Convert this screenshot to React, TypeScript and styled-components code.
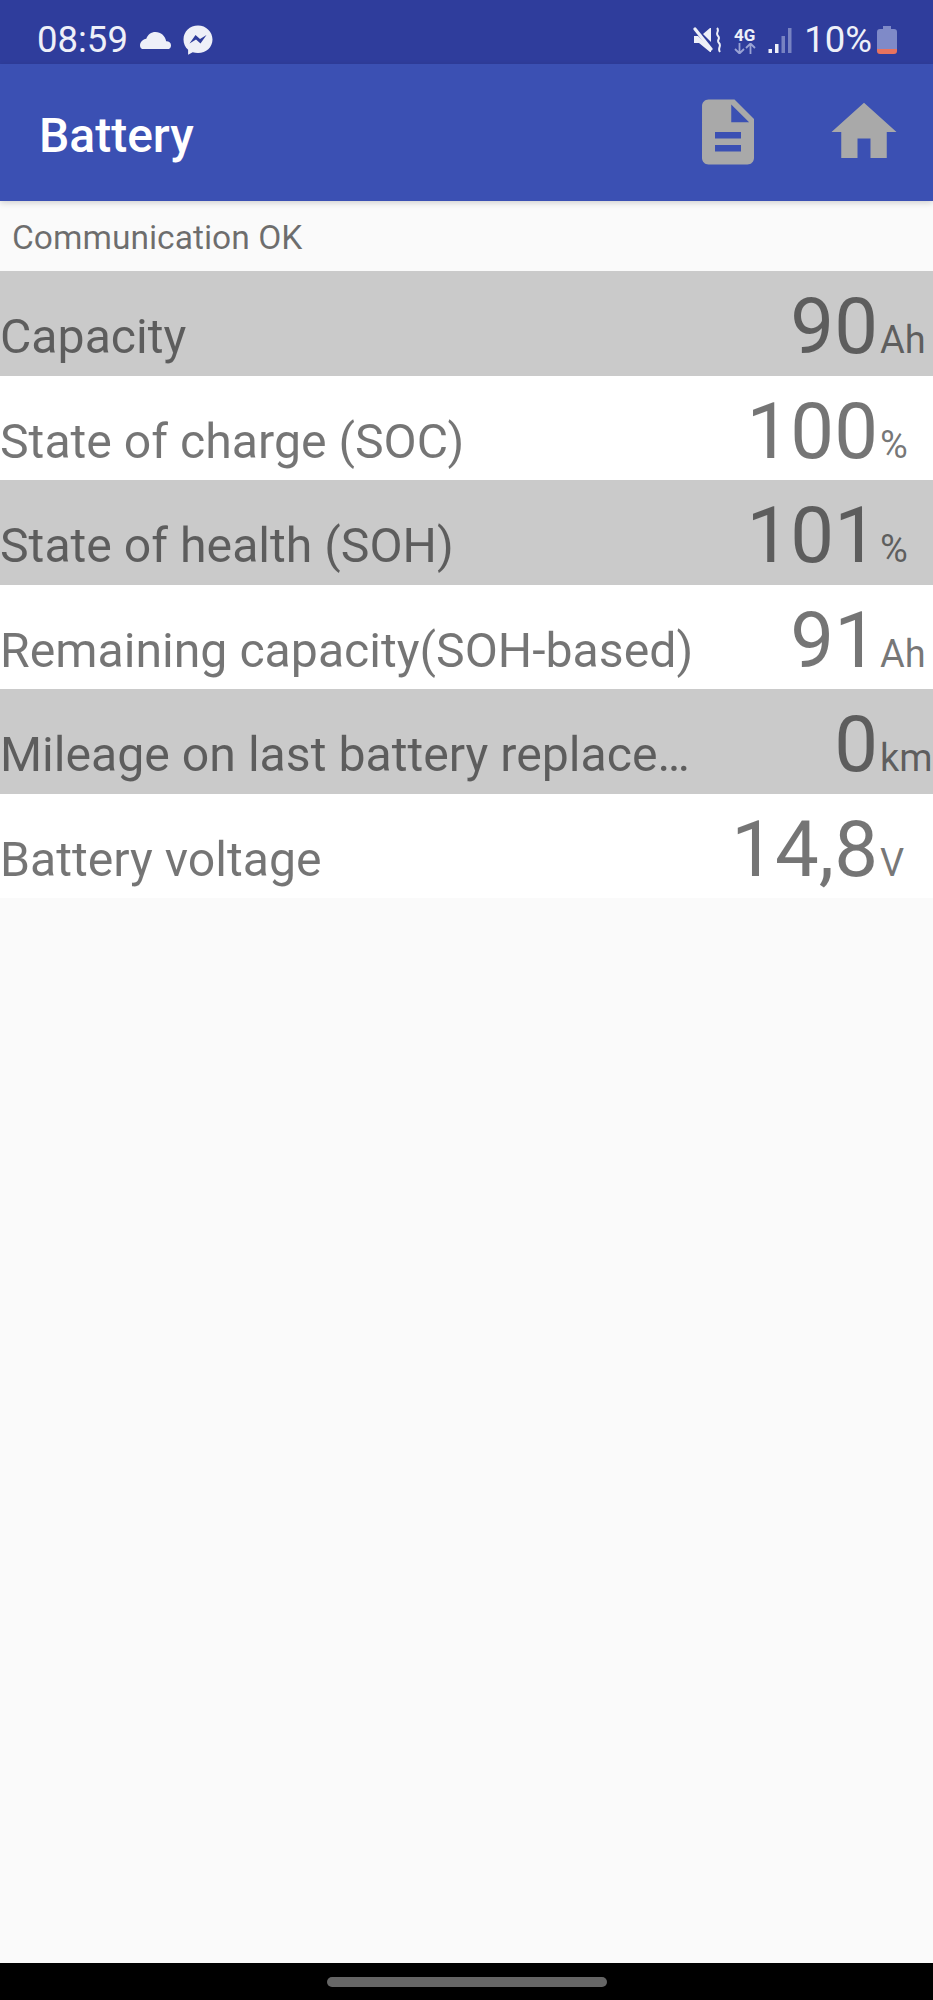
import React from "react";
import styled, { createGlobalStyle } from "styled-components";

const Global = createGlobalStyle`
  html, body { margin: 0; padding: 0; background: #fafafa; }
  * { box-sizing: border-box; }
`;

const Screen = styled.div`
  width: 933px;
  height: 2000px;
  display: flex;
  flex-direction: column;
  background: #fafafa;
  font-family: Roboto, "Liberation Sans", sans-serif;
  overflow: hidden;
`;

const StatusBar = styled.div`
  height: 64px;
  flex: none;
  background: #2f3d9c;
  color: #eef0f8;
  display: flex;
  align-items: center;
  padding: 16px 36px 0 37px;
  font-size: 36.5px;
`;

const StatusGroup = styled.div<{ $gap: number }>`
  display: flex;
  align-items: center;
  gap: ${(p) => p.$gap}px;
`;

const Spacer = styled.div`
  flex: 1;
`;

const StatusText = styled.span`
  line-height: 40px;
`;

const NetStack = styled.div`
  width: 23px;
  display: flex;
  flex-direction: column;
  align-items: center;
`;

const NetLabel = styled.span`
  font-size: 17px;
  line-height: 16px;
  font-weight: 700;
`;

const AppBar = styled.header`
  height: 137px;
  flex: none;
  background: #3b50b3;
  display: flex;
  align-items: center;
  padding: 0 30px 2px 39px;
  position: relative;
  z-index: 1;
  box-shadow: 0 2px 6px rgba(0, 0, 0, 0.16);
`;

const Title = styled.h1`
  margin: 0;
  padding-top: 7px;
  color: #fff;
  font-size: 48px;
  font-weight: 500;
  flex: 1;
`;

const ActionIcon = styled.svg`
  display: block;
  fill: #a9a9a9;
`;

const Actions = styled.div`
  display: flex;
  align-items: center;
  gap: 58px;
`;

const CommStatus = styled.div`
  height: 70px;
  flex: none;
  padding: 12px 0 0 12px;
  font-size: 33.6px;
  line-height: 50px;
  color: rgba(0, 0, 0, 0.56);
`;

const Row = styled.div<{ $shaded: boolean }>`
  height: 104.5px;
  flex: none;
  display: flex;
  align-items: baseline;
  padding-top: 16px;
  background: ${(p) => (p.$shaded ? "#cacaca" : "#ffffff")};
  color: rgba(0, 0, 0, 0.54);
`;

const Label = styled.div`
  flex: none;
  width: 692px;
  font-size: 48.2px;
  line-height: 80px;
  white-space: nowrap;
`;

const Value = styled.div`
  flex: 1;
  text-align: right;
  font-size: 78px;
  line-height: 80px;
  white-space: nowrap;
`;

const Unit = styled.div`
  flex: none;
  width: 53px;
  margin-left: 2px;
  font-size: 38px;
  white-space: nowrap;
`;

const NavBar = styled.div`
  margin-top: auto;
  height: 37px;
  flex: none;
  background: #000;
  display: flex;
  justify-content: center;
  padding-top: 14px;
`;

const HomeHandle = styled.div`
  width: 280px;
  height: 10px;
  border-radius: 5px;
  background: #666;
`;

const rows = [
  { label: "Capacity", value: "90", unit: "Ah" },
  { label: "State of charge (SOC)", value: "100", unit: "%" },
  { label: "State of health (SOH)", value: "101", unit: "%" },
  { label: "Remaining capacity(SOH-based)", value: "91", unit: "Ah" },
  { label: "Mileage on last battery replace…", value: "0", unit: "km" },
  { label: "Battery voltage", value: "14,8", unit: "V" },
];

const CloudIcon = () => (
  <svg width="31" height="18" viewBox="0 0 32 20" fill="#eef0f8" preserveAspectRatio="none">
    <path d="M4 20h24a4 4 0 0 0 4-4 4.500 4.500 0 0 0-5-4.500C26 5 21.500 1 16 1c-4.500 0-8 3-9.500 7.500C3 9 0 12 0 16a4 4 0 0 0 4 4z" />
  </svg>
);

const MessengerIcon = () => (
  <svg width="30" height="30" viewBox="0 0 30 30">
    <path fill="#eef0f8" d="M15 .5C6.800.5.500 6.500.5 14.500c0 4.200 1.700 7.800 4.600 10.300v5l4.600-2.500c1.600.5 3.400.8 5.300.8 8.200 0 14.500-6 14.500-13.600S23.200.5 15 .5z" />
    <path fill="#2f3d9c" d="M6.500 18.500l6-8.500 4.500 4 6.500-4-6 8.500-4.500-4z" />
  </svg>
);

const MuteIcon = () => (
  <svg width="28" height="28" viewBox="0 0 28 28" fill="none">
    <path fill="#eef0f8" d="M10 8l7-6h1v14zM1 10h4l13 12v4h-1L6 17H1z" />
    <path stroke="#eef0f8" strokeWidth="3.200" strokeLinecap="round" d="M2 3l16 20" />
    <path stroke="#eef0f8" strokeWidth="2" d="M24 2c3 3-2 5 1 8s-2 4 1 7-2 5 1 9" />
  </svg>
);

const ArrowsIcon = () => (
  <svg width="22" height="11" viewBox="0 0 22 11" fill="none" stroke="#9aa3d4" strokeWidth="1.800">
    <path d="M5.500 0v10M1 6l4.500 4.500L10 6M16.500 11V1M12 5l4.500-4.500L21 5" />
  </svg>
);

const SignalIcon = () => (
  <svg width="24" height="26" viewBox="0 0 24 26">
    <rect x="0.500" y="22" width="3.500" height="4" fill="#eef0f8" />
    <rect x="7" y="17" width="3.500" height="9" fill="#eef0f8" />
    <rect x="13.500" y="9" width="3.500" height="17" fill="#7883c2" />
    <rect x="20" y="1" width="3.500" height="25" fill="#7883c2" />
  </svg>
);

const BatteryIcon = () => (
  <svg width="20" height="28" viewBox="0 0 20 28">
    <path fill="#7f8ac8" d="M6 0h8v3h3a3 3 0 0 1 3 3v17H0V6a3 3 0 0 1 3-3h3z" />
    <path fill="#e8735f" d="M0 23h20v2a3 3 0 0 1-3 3H3a3 3 0 0 1-3-3z" />
  </svg>
);

export default function App() {
  return (
    <Screen>
      <Global />
      <StatusBar>
        <StatusGroup $gap={12}>
          <StatusText>08:59</StatusText>
          <CloudIcon />
          <MessengerIcon />
        </StatusGroup>
        <Spacer />
        <StatusGroup $gap={12}>
          <MuteIcon />
          <NetStack>
            <NetLabel>4G</NetLabel>
            <ArrowsIcon />
          </NetStack>
          <SignalIcon />
          <StatusGroup $gap={5}>
            <StatusText>10%</StatusText>
            <BatteryIcon />
          </StatusGroup>
        </StatusGroup>
      </StatusBar>
      <AppBar>
        <Title>Battery</Title>
        <Actions>
          <ActionIcon width="78" height="78" viewBox="0 0 24 24">
            <path d="M14 2H6c-1.100 0-1.990.9-1.990 2L4 20c0 1.100.89 2 1.990 2H18c1.100 0 2-.9 2-2V8l-6-6zm2 16H8v-2h8v2zm0-4H8v-2h8v2zm-3-5V3.500L18.500 9H13z" />
          </ActionIcon>
          <ActionIcon width="78" height="78" viewBox="0 0 24 24">
            <path d="M10 20v-6h4v6h5v-8h3L12 3 2 12h3v8z" />
          </ActionIcon>
        </Actions>
      </AppBar>
      <CommStatus>Communication OK</CommStatus>
      {rows.map((r, i) => (
        <Row key={r.label} $shaded={i % 2 === 0}>
          <Label>{r.label}</Label>
          <Value>{r.value}</Value>
          <Unit>{r.unit}</Unit>
        </Row>
      ))}
      <NavBar>
        <HomeHandle />
      </NavBar>
    </Screen>
  );
}
